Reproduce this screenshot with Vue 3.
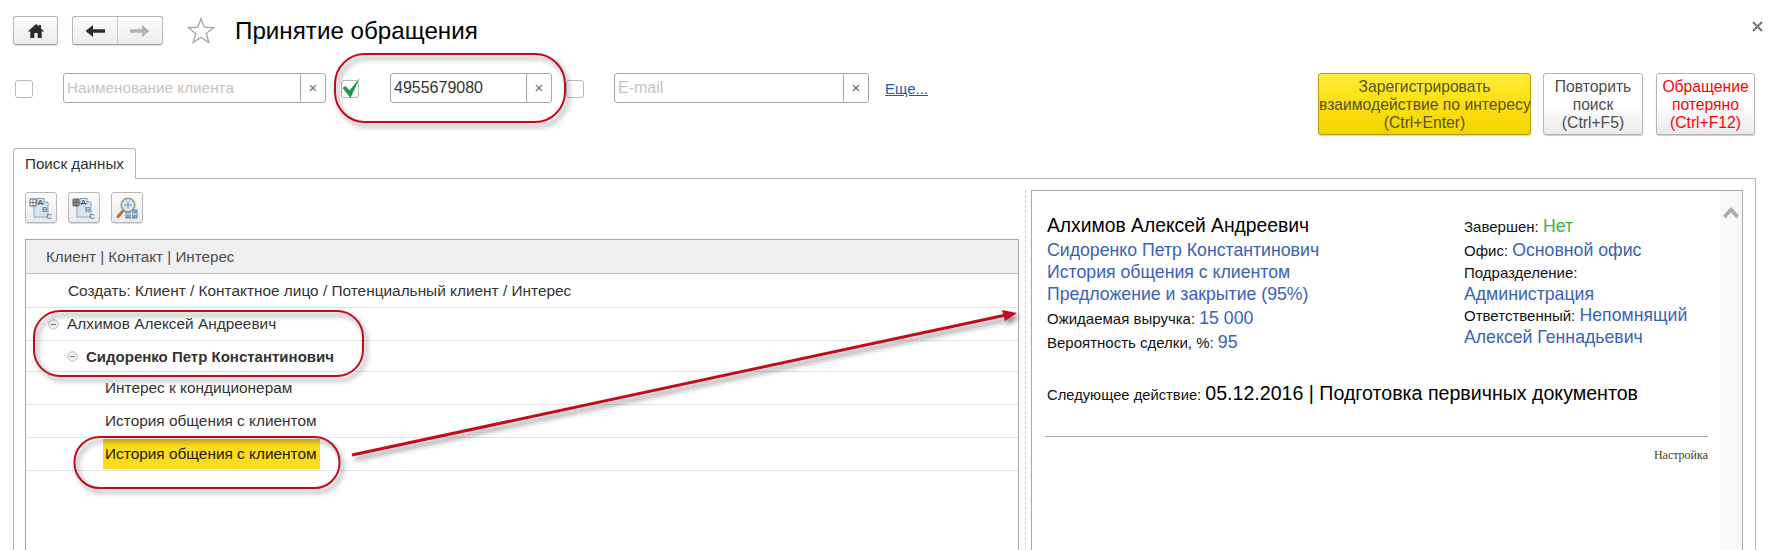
<script setup>
const rows = [
  { text: 'Создать: Клиент / Контактное лицо / Потенциальный клиент / Интерес', cls: 'lvl1' },
  { text: 'Алхимов Алексей Андреевич', cls: 'lvl0', minus: true },
  { text: 'Сидоренко Петр Константинович', cls: 'lvl0b', minus: true },
  { text: 'Интерес к кондиционерам', cls: 'lvl2' },
  { text: 'История общения с клиентом', cls: 'lvl2' },
  { text: 'История общения с клиентом', cls: 'lvl2 sel' },
]
</script>

<template>
  <div class="page">
    <header class="head">
      <button class="btn home">
        <svg width="18" height="16" viewBox="0 0 18 16"><path d="M9 1 0.8 8.6h2.5V15h4V10h3.4v5h4V8.6h2.5L14 5.4V2h-2v1.6z" fill="#2b2b2b"/></svg>
      </button>
      <div class="btn nav">
        <span class="nav-cell first">
          <svg width="20" height="14" viewBox="0 0 20 14"><path d="M0.500 7 8 1v4.300H20v3.400H8V13z" fill="#2b2b2b"/></svg>
        </span>
        <span class="nav-cell">
          <svg width="20" height="14" viewBox="0 0 20 14"><path d="M19.500 7 12 1v4.300H0v3.400h12V13z" fill="#b4b4b4"/></svg>
        </span>
      </div>
      <svg class="star" width="28" height="27" viewBox="0 0 28 27"><path d="M14 1.600 17.300 10.300l9.400.4-7.400 5.800 2.600 9-7.900-5.200-7.900 5.200 2.600-9-7.400-5.800 9.400-.4z" fill="none" stroke="#a8a8a8" stroke-width="1.400"/></svg>
      <h1 class="title">Принятие обращения</h1>
      <svg class="close" width="11" height="11" viewBox="0 0 11 11"><path d="M1 1l9 9M10 1 1 10" stroke="#777" stroke-width="2.200"/></svg>
    </header>

    <section class="filters">
      <span class="cb"></span>
      <div class="field f1"><span class="val ph">Наименование клиента</span><span class="clr">×</span></div>
      <span class="cb second">
        <svg class="tick" width="20" height="24" viewBox="0 0 20 24"><path d="M0.500 13 3.500 11 7.500 15.500 18 2.500 8.500 23z" fill="#1c9a4c"/></svg>
      </span>
      <div class="field f2"><span class="val num">4955679080</span><span class="clr">×</span></div>
      <span class="cb third"></span>
      <div class="field f3"><span class="val ph mail">E-mail</span><span class="clr">×</span></div>
      <a class="more">Еще...</a>
      <div class="actions">
        <button class="act yellow">Зарегистрировать<br>взаимодействие по интересу<br>(Ctrl+Enter)</button>
        <button class="act grey">Повторить<br>поиск<br>(Ctrl+F5)</button>
        <button class="act lost">Обращение<br>потеряно<br>(Ctrl+F12)</button>
      </div>
    </section>

    <div class="tabbar"><span class="tab">Поиск данных</span></div>

    <main class="panel">
      <div class="left">
        <div class="tools">
          <button class="tool" v-for="n in 2" :key="n">
            <svg width="24" height="24" viewBox="0 0 24 24">
              <path d="M5 6h14v15H5z" fill="#d5e4f0" stroke="#8fa8bc"/>
              <path d="M8 2.500h7v5H8z" fill="#e9f1f7" stroke="#7d97ad"/>
              <path d="M1 3h6v7H1z" :fill="n === 1 ? '#fff' : '#8a8a8a'" stroke="#666"/>
              <path d="M1 6.500h6M4 3v7" stroke="#666" stroke-width=".8"/>
              <text x="8.500" y="9" class="gl a">A</text>
              <text x="13" y="16" class="gl">B</text>
              <text x="17" y="23" class="gl">C</text>
            </svg>
          </button>
          <button class="tool">
            <svg width="24" height="24" viewBox="0 0 24 24">
              <path d="M11 14h11v8H11z" fill="#7fa6c4" stroke="#5b7f9b"/>
              <path d="M16.500 14v8M11 18h11" stroke="#dfeaf2"/>
              <path d="M8 15 3 20.500" stroke="#b5763a" stroke-width="3.200" stroke-linecap="round"/>
              <circle cx="13" cy="9" r="6.800" fill="#d6e7f4" stroke="#a09583" stroke-width="1.600"/>
              <path d="M9.500 9h7M13 5.500v7" stroke="#88abc8" stroke-width="1.300"/>
            </svg>
          </button>
        </div>
        <div class="table">
          <div class="thead">Клиент | Контакт | Интерес</div>
          <div v-for="(r, i) in rows" :key="i" class="row" :class="r.cls">
            <svg v-if="r.minus" class="minus" width="11" height="11" viewBox="0 0 11 11"><circle cx="5.500" cy="5.500" r="4.700" fill="#f2f2f2" stroke="#b9b9b9"/><path d="M3 5.500h5" stroke="#777"/></svg>
            <span class="txt">{{ r.text }}</span>
          </div>
        </div>
      </div>

      <div class="split"></div>

      <div class="preview">
        <div class="pv-body">
          <div class="cols">
            <div class="col-a">
              <div class="name">Алхимов Алексей Андреевич</div>
              <div class="ln link gap3">Сидоренко Петр Константинович</div>
              <div class="ln link">История общения с клиентом</div>
              <div class="ln link">Предложение и закрытие (95%)</div>
              <div class="ln gap2"><span class="lb">Ожидаемая выручка: </span><span class="link">15 000</span></div>
              <div class="ln gap2"><span class="lb">Вероятность сделки, %: </span><span class="link">95</span></div>
            </div>
            <div class="col-b">
              <div class="ln"><span class="lb">Завершен: </span><span class="green">Нет</span></div>
              <div class="ln gap1"><span class="lb">Офис: </span><span class="link">Основной офис</span></div>
              <div class="ln"><span class="lb">Подразделение:</span></div>
              <div class="ln link">Администрация</div>
              <div class="ln back"><span class="lb">Ответственный: </span><span class="link">Непомнящий</span></div>
              <div class="ln link">Алексей Геннадьевич</div>
            </div>
          </div>
          <div class="next"><span class="lb">Следующее действие: </span><span class="big">05.12.2016 | Подготовка первичных документов</span></div>
          <hr class="rule">
          <div class="cfg">Настройка</div>
        </div>
        <div class="scroll">
          <svg width="16" height="12" viewBox="0 0 16 12"><path d="M8 0 16 8.500 13.500 11.500 8 5.500 2.500 11.500 0 8.500z" fill="#adadad"/></svg>
        </div>
      </div>
    </main>

    <svg class="marks" width="1772" height="550" viewBox="0 0 1772 550">
      <defs>
        <filter id="sh" x="-10%" y="-30%" width="125%" height="170%">
          <feDropShadow dx="3" dy="4" stdDeviation="2.500" flood-color="#000" flood-opacity=".45"/>
        </filter>
      </defs>
      <g filter="url(#sh)" fill="none" stroke="#c00d1e" stroke-width="2">
        <rect x="335" y="54" width="230" height="68" rx="30"/>
        <rect x="34" y="311" width="329" height="65" rx="26"/>
        <rect x="74.500" y="437" width="265" height="51" rx="25"/>
      </g>
      <g filter="url(#sh)">
        <path d="M352 455 1006 315" stroke="#c00d1e" stroke-width="3" fill="none"/>
        <path d="M1017 313 1005 321 1002 310z" fill="#c00d1e"/>
      </g>
    </svg>
  </div>
</template>

<style>
html, body { margin: 0; background: #fff; }
</style>

<style scoped>
.page {
  position: relative;
  width: 1772px;
  height: 550px;
  overflow: hidden;
  background: #fff;
  font-family: "Liberation Sans", Arial, sans-serif;
  color: #333;
}
.head {
  display: flex;
  align-items: center;
  height: 29px;
  padding: 16px 0 0 13px;
}
.btn {
  box-sizing: border-box;
  height: 29px;
  padding: 0;
  border: 1px solid #b5b5b5;
  border-bottom-color: #a0a0a0;
  border-radius: 3px;
  background: linear-gradient(#fdfdfd, #ececec);
  box-shadow: 0 1px 1px rgba(0,0,0,.12);
  display: flex;
  align-items: center;
  justify-content: center;
}
.home { width: 45px; }
.nav { width: 91px; margin-left: 14px; }
.nav-cell { flex: 1; height: 100%; display: flex; align-items: center; justify-content: center; }
.nav-cell.first { border-right: 1px solid #cfcfcf; }
.star { margin-left: 24px; }
.title {
  margin: 0 0 0 20px;
  font-size: 24.200px;
  font-weight: 400;
  color: #000;
  white-space: nowrap;
}
.close { align-self: flex-start; margin: 5px 9px 0 auto; }

.filters {
  display: flex;
  align-items: flex-start;
  height: 62px;
  margin-top: 28px;
  padding-left: 15px;
}
.cb {
  position: relative;
  box-sizing: border-box;
  width: 18px;
  height: 18px;
  margin-top: 7px;
  border: 1px solid #b8b8b8;
  border-radius: 3px;
  background: #fff;
}
.cb.second { margin-left: 15px; }
.cb.third { margin-left: 14px; }
.tick { position: absolute; left: 0; top: -6px; }
.field {
  box-sizing: border-box;
  display: flex;
  height: 30px;
  border: 1px solid #a8a8a8;
  border-radius: 3px;
  background: #fff;
  font-size: 15.300px;
}
.f1 { width: 263px; margin-left: 30px; }
.f2 { width: 162px; margin-left: 31px; }
.f3 { width: 255px; margin-left: 30px; }
.val { flex: 1; padding-left: 3px; line-height: 28px; color: #333; white-space: nowrap; }
.val.ph { color: #c4c4c4; }
.val.num, .val.mail { font-size: 16px; }
.clr {
  width: 24px;
  border-left: 1px solid #a8a8a8;
  text-align: center;
  line-height: 28px;
  font-size: 15px;
  color: #666;
}
.more {
  margin: 7px 0 0 16px;
  font-size: 15px;
  color: #1a5bb5;
  text-decoration: underline;
}
.actions {
  display: flex;
  gap: 12px;
  margin-left: auto;
  margin-right: 17px;
}
.act {
  box-sizing: border-box;
  height: 62px;
  padding: 2px 0 0;
  border: 1px solid #b5b5b5;
  border-radius: 3px;
  background: linear-gradient(#fff 55%, #e9e9e9);
  box-shadow: 0 1px 1px rgba(0,0,0,.2);
  font: 15.700px/18px "Liberation Sans", Arial, sans-serif;
  color: #4d4d4d;
  white-space: nowrap;
}
.yellow {
  width: 213px;
  border-color: #b8a00e;
  background: linear-gradient(#ffec3e, #fcdf0f 50%, #f2d500);
  color: #5a5220;
}
.grey { width: 100px; }
.lost { width: 99px; margin-left: 1px; color: #f00; }

.tabbar { display: flex; height: 30px; margin-top: 13px; padding-left: 13px; }
.tab {
  box-sizing: border-box;
  width: 123px;
  height: 31px;
  position: relative;
  border: 1px solid #b5b5b5;
  border-bottom: 0;
  border-radius: 3px 3px 0 0;
  background: #fff;
  padding-left: 11px;
  font-size: 15.200px;
  line-height: 30px;
  color: #333;
  z-index: 1;
}
.panel {
  box-sizing: border-box;
  display: flex;
  width: 1743px;
  height: 400px;
  margin-left: 13px;
  border: 1px solid #b5b5b5;
  border-bottom: 0;
  padding: 11px 12px 0 11px;
}
.left { width: 994px; flex: none; }
.tools { display: flex; gap: 11px; height: 47px; margin-top: 2px; }
.tool {
  box-sizing: border-box;
  width: 32px;
  height: 31px;
  padding: 0;
  border: 1px solid #b8b8b8;
  border-radius: 3px;
  background: linear-gradient(#fdfdfd, #eaeaea);
  box-shadow: 0 1px 1px rgba(0,0,0,.15);
  display: flex;
  align-items: center;
  justify-content: center;
}
.gl { font: bold 8px "Liberation Sans", Arial, sans-serif; fill: #7b8a98; }
.gl.a { fill: #3f5a72; }
.table {
  box-sizing: border-box;
  height: 320px;
  border: 1px solid #a8a8a8;
  border-bottom: 0;
}
.thead {
  box-sizing: border-box;
  height: 34px;
  border-bottom: 1px solid #bdbdbd;
  background: #f0f0f0;
  padding-left: 20px;
  font-size: 15.200px;
  line-height: 33px;
  color: #4c4c4c;
}
.row {
  box-sizing: border-box;
  display: flex;
  align-items: center;
  height: 33px;
  border-bottom: 1px solid #e3e3e3;
  font-size: 15.400px;
  color: #333;
  white-space: nowrap;
}
.lvl1 { padding-left: 42px; height: 34px; }
.lvl0 { padding-left: 22px; }
.lvl0 .minus { margin-right: 8px; }
.lvl0b { padding-left: 41px; font-size: 15px; font-weight: 700; height: 31px; }
.lvl0b .minus { margin-right: 8px; }
.lvl2 { padding-left: 79px; }
.sel .txt {
  box-sizing: border-box;
  height: 30px;
  margin-left: -2px;
  padding: 0 3px 0 2px;
  line-height: 30px;
  color: #1f1a00;
  background: linear-gradient(#d9bd28, #fcdc1e 4px);
}

.split {
  flex: none;
  width: 0;
  height: 400px;
  margin: 0 5px 0 6px;
  border-left: 1px dashed #d4d4d4;
}
.preview {
  box-sizing: border-box;
  flex: 1;
  display: flex;
  height: 400px;
  border: 1px solid #a8a8a8;
  border-bottom: 0;
}
.pv-body { box-sizing: border-box; flex: 1; padding: 24px 12px 0 15px; }
.scroll { width: 22px; background: #f8f8f8; display: flex; justify-content: center; padding-top: 16px; box-sizing: border-box; }
.cols { display: flex; }
.col-a { width: 417px; }
.col-b { width: 240px; }
.name { font-size: 19.300px; line-height: 22px; color: #000; white-space: nowrap; }
.ln { font-size: 17.700px; line-height: 22px; white-space: nowrap; }
.gap1 { margin-top: 2px; }
.gap2 { margin-top: 2px; }
.gap3 { margin-top: 2px; }
.back { margin-top: -1px; }
.link { color: #3a62b5; }
.green { color: #3db33d; }
.lb { font-size: 15px; line-height: 1; color: #111; }
.next { margin-top: 29px; line-height: 26px; white-space: nowrap; }
.next .lb { font-size: 14.750px; }
.big { font-size: 19.600px; line-height: 1; color: #000; }
.rule { margin: 28px 0 0 -2px; border: 0; border-top: 1px solid #a6a6a6; }
.cfg { margin-top: 11px; text-align: right; font: 12px "Liberation Serif", "Times New Roman", serif; color: #4a4010; }

.marks { position: absolute; left: 0; top: 0; pointer-events: none; }
</style>
